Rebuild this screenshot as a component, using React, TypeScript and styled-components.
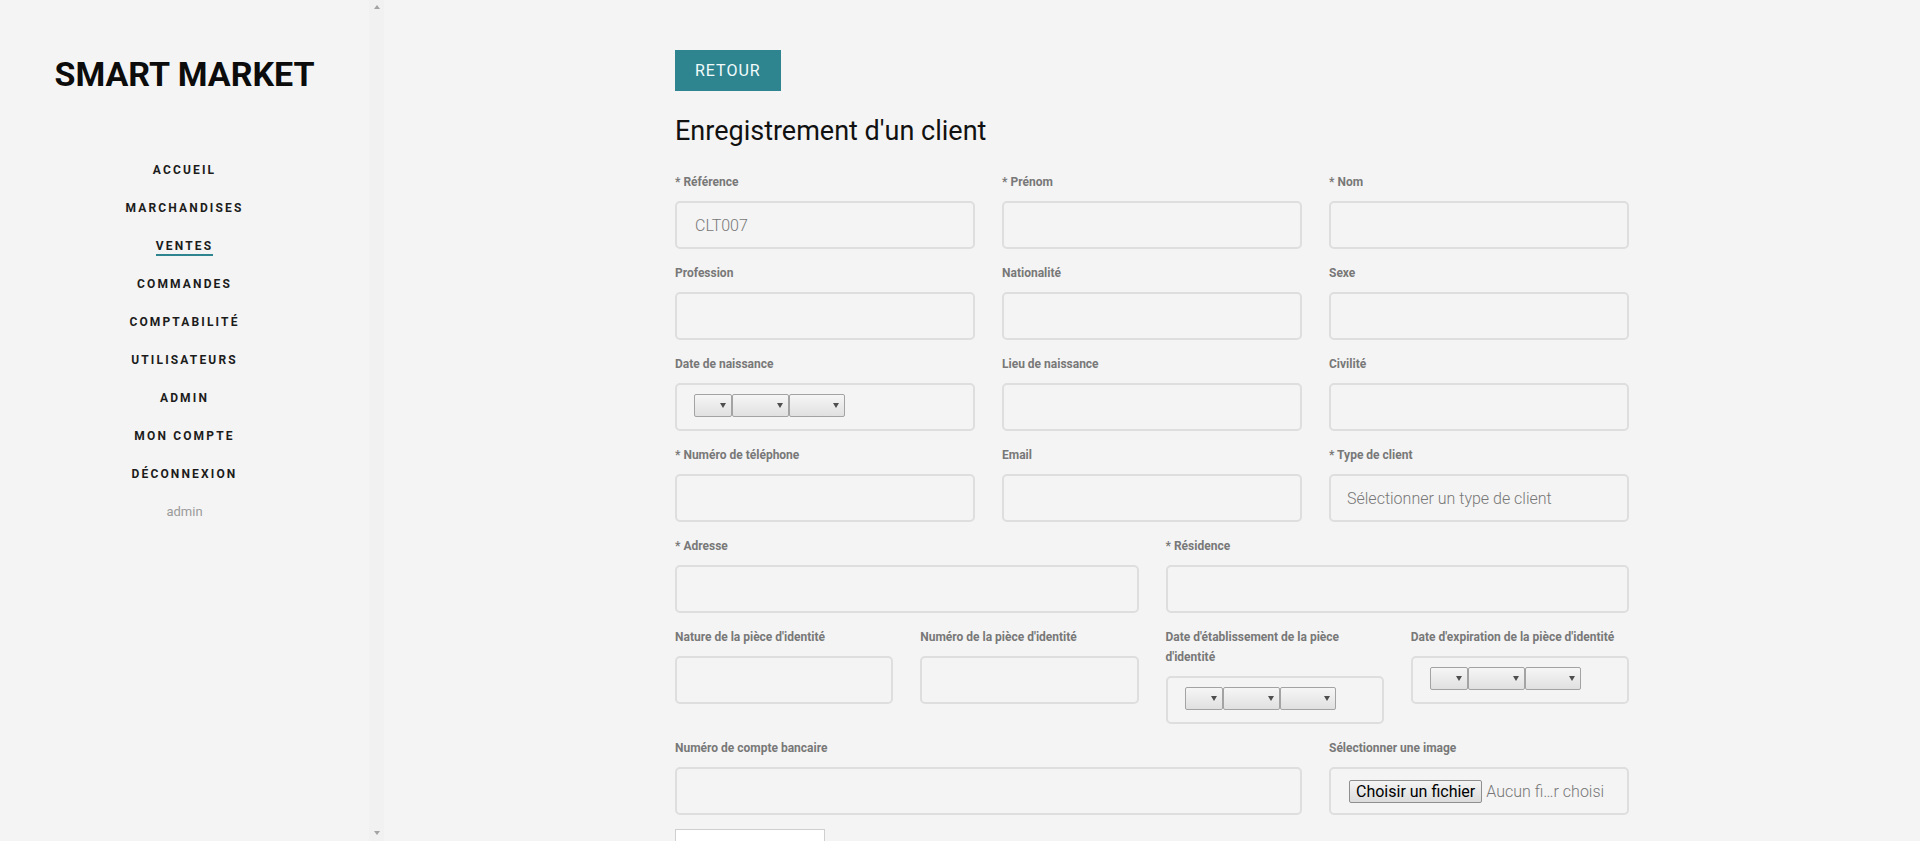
import React from "react";
import styled, { createGlobalStyle } from "styled-components";

const GlobalStyle = createGlobalStyle`
  html, body {
    margin: 0;
    padding: 0;
    background: #f4f4f4;
    font-family: Roboto, "Liberation Sans", Arial, sans-serif;
  }
  *, *::before, *::after { box-sizing: border-box; }
`;

const TEAL = "#2e8590";

const Layout = styled.div`
  display: flex;
  height: 100vh;
  overflow: hidden;
  background: #f4f4f4;
`;

const Sidebar = styled.aside`
  flex: none;
  width: 369px;
  height: 100vh;
  overflow: hidden;
  padding-top: 52px;
  text-align: center;
`;

const ScrollTrack = styled.div`
  flex: none;
  width: 15px;
  height: 100vh;
  background: #f1f1f1;
  display: flex;
  flex-direction: column;
  justify-content: space-between;
  align-items: center;
  padding: 5px 0 6px;
`;

const ScrollArrow = styled.span<{ $down?: boolean }>`
  width: 0;
  height: 0;
  border-left: 3.5px solid transparent;
  border-right: 3.5px solid transparent;
  ${(p) =>
    p.$down
      ? "border-top: 4px solid #a3a3a3;"
      : "border-bottom: 4px solid #a3a3a3;"}
`;

const Brand = styled.h1`
  margin: 0;
  font-size: 34px;
  line-height: 44px;
  font-weight: 700;
  color: #0c0c0c;
`;

const NavList = styled.ul`
  list-style: none;
  margin: 66px 0 0;
  padding: 0;
  display: flex;
  flex-direction: column;
`;

const NavItem = styled.li`
  height: 38px;
  display: flex;
  justify-content: center;
  align-items: flex-start;
`;

const NavLink = styled.a<{ $active?: boolean }>`
  display: inline-block;
  font-size: 12px;
  line-height: 16px;
  font-weight: 700;
  letter-spacing: 2.15px;
  text-transform: uppercase;
  color: #1c1c1c;
  text-decoration: none;
  border-bottom: 2px solid ${(p) => (p.$active ? TEAL : "transparent")};
`;

const UserName = styled.span`
  font-size: 13px;
  line-height: 16px;
  font-weight: 400;
  color: #9a9a9a;
`;

const Main = styled.main`
  flex: 1;
  height: 100vh;
  overflow: hidden;
  padding-top: 50px;
`;

const Container = styled.div`
  width: 954px;
  margin: 0 auto;
`;

const BackButton = styled.button`
  height: 41px;
  padding: 0 20px;
  border: none;
  background: ${TEAL};
  color: #f2fbfb;
  font-family: Roboto, sans-serif;
  font-size: 16px;
  font-weight: 400;
  letter-spacing: 1px;
  text-transform: uppercase;
  cursor: pointer;
`;

const Title = styled.h2`
  margin: 24px 0 25px;
  font-size: 27px;
  line-height: 32px;
  font-weight: 400;
  color: #111;
`;

const FormGrid = styled.form`
  display: grid;
  grid-template-columns: repeat(12, 1fr);
  column-gap: 27px;
  align-items: start;
`;

const Field = styled.div<{ $span: number }>`
  grid-column: span ${(p) => p.$span};
  margin-bottom: 14px;
`;

const Label = styled.label`
  display: block;
  font-size: 12px;
  line-height: 20px;
  font-weight: 700;
  color: #787878;
  margin-bottom: 9px;
`;

const boxStyle = `
  width: 100%;
  height: 48px;
  border: 2px solid #dedede;
  border-radius: 5px;
  background: transparent;
  font-family: Roboto, sans-serif;
  font-size: 16px;
  font-weight: 300;
  color: #777;
`;

const TextInput = styled.input`
  ${boxStyle}
  padding: 0 18px;
  outline: none;
`;

const TypeSelect = styled.select`
  ${boxStyle}
  appearance: none;
  padding: 0 16px;
  outline: none;
`;

const DateBox = styled.div`
  ${boxStyle}
  display: flex;
  align-items: flex-start;
  padding: 9px 17px;
`;

const MiniSelectWrap = styled.span<{ $w: number }>`
  position: relative;
  display: inline-block;
  width: ${(p) => p.$w}px;
  height: 23px;
`;

const MiniSelect = styled.select`
  appearance: none;
  width: 100%;
  height: 23px;
  margin: 0;
  border: 1px solid #a3a3a3;
  border-radius: 2px;
  background: linear-gradient(#f6f6f6, #e0e0e0);
  outline: none;
`;

const Caret = styled.span`
  position: absolute;
  right: 6px;
  top: 9px;
  width: 0;
  height: 0;
  border-left: 3px solid transparent;
  border-right: 3px solid transparent;
  border-top: 5px solid #4e4e4e;
  pointer-events: none;
`;

const FileBox = styled.div`
  ${boxStyle}
  display: flex;
  align-items: center;
  gap: 4px;
  padding: 0 18px;
  overflow: hidden;
  white-space: nowrap;
`;

const FileButton = styled.span`
  display: inline-block;
  height: 23px;
  line-height: 21px;
  padding: 0 6px;
  border: 1px solid #8f8f8f;
  border-radius: 2px;
  background: linear-gradient(#f4f4f4, #dcdcdc);
  color: #000;
  font-size: 16px;
  font-weight: 400;
`;

const FileName = styled.span`
  font-size: 16px;
  font-weight: 300;
  color: #777;
`;

const SubmitButton = styled.button`
  display: block;
  width: 150px;
  height: 41px;
  border: 1px solid #cfcfcf;
  background: #fff;
`;

const navItems = [
  "Accueil",
  "Marchandises",
  "Ventes",
  "Commandes",
  "Comptabilité",
  "Utilisateurs",
  "Admin",
  "Mon compte",
  "Déconnexion",
];

function DatePicker() {
  const parts = [38, 57, 56];
  return (
    <DateBox>
      {parts.map((w, i) => (
        <MiniSelectWrap key={i} $w={w}>
          <MiniSelect defaultValue="">
            <option value=""></option>
          </MiniSelect>
          <Caret />
        </MiniSelectWrap>
      ))}
    </DateBox>
  );
}

type F = { label: string; span: number; kind?: "text" | "date" | "type" | "file"; value?: string };

const fields: F[] = [
  { label: "* Référence", span: 4, value: "CLT007" },
  { label: "* Prénom", span: 4 },
  { label: "* Nom", span: 4 },
  { label: "Profession", span: 4 },
  { label: "Nationalité", span: 4 },
  { label: "Sexe", span: 4 },
  { label: "Date de naissance", span: 4, kind: "date" },
  { label: "Lieu de naissance", span: 4 },
  { label: "Civilité", span: 4 },
  { label: "* Numéro de téléphone", span: 4 },
  { label: "Email", span: 4 },
  { label: "* Type de client", span: 4, kind: "type" },
  { label: "* Adresse", span: 6 },
  { label: "* Résidence", span: 6 },
  { label: "Nature de la pièce d'identité", span: 3 },
  { label: "Numéro de la pièce d'identité", span: 3 },
  { label: "Date d'établissement de la pièce d'identité", span: 3, kind: "date" },
  { label: "Date d'expiration de la pièce d'identité", span: 3, kind: "date" },
  { label: "Numéro de compte bancaire", span: 8 },
  { label: "Sélectionner une image", span: 4, kind: "file" },
];

function renderControl(f: F) {
  switch (f.kind) {
    case "date":
      return <DatePicker />;
    case "type":
      return (
        <TypeSelect defaultValue="">
          <option value="">Sélectionner un type de client</option>
        </TypeSelect>
      );
    case "file":
      return (
        <FileBox>
          <FileButton>Choisir un fichier</FileButton>
          <FileName>Aucun fi…r choisi</FileName>
        </FileBox>
      );
    default:
      return <TextInput defaultValue={f.value ?? ""} />;
  }
}

export default function App() {
  return (
    <>
      <GlobalStyle />
      <Layout>
        <Sidebar>
          <Brand>SMART MARKET</Brand>
          <NavList>
            {navItems.map((n) => (
              <NavItem key={n}>
                <NavLink href="#" $active={n === "Ventes"}>
                  {n}
                </NavLink>
              </NavItem>
            ))}
            <NavItem>
              <UserName>admin</UserName>
            </NavItem>
          </NavList>
        </Sidebar>
        <ScrollTrack>
          <ScrollArrow />
          <ScrollArrow $down />
        </ScrollTrack>
        <Main>
          <Container>
            <BackButton>Retour</BackButton>
            <Title>Enregistrement d'un client</Title>
            <FormGrid onSubmit={(e) => e.preventDefault()}>
              {fields.map((f) => (
                <Field key={f.label} $span={f.span}>
                  <Label>{f.label}</Label>
                  {renderControl(f)}
                </Field>
              ))}
            </FormGrid>
            <SubmitButton type="submit" aria-label="Enregistrer" />
          </Container>
        </Main>
      </Layout>
    </>
  );
}
